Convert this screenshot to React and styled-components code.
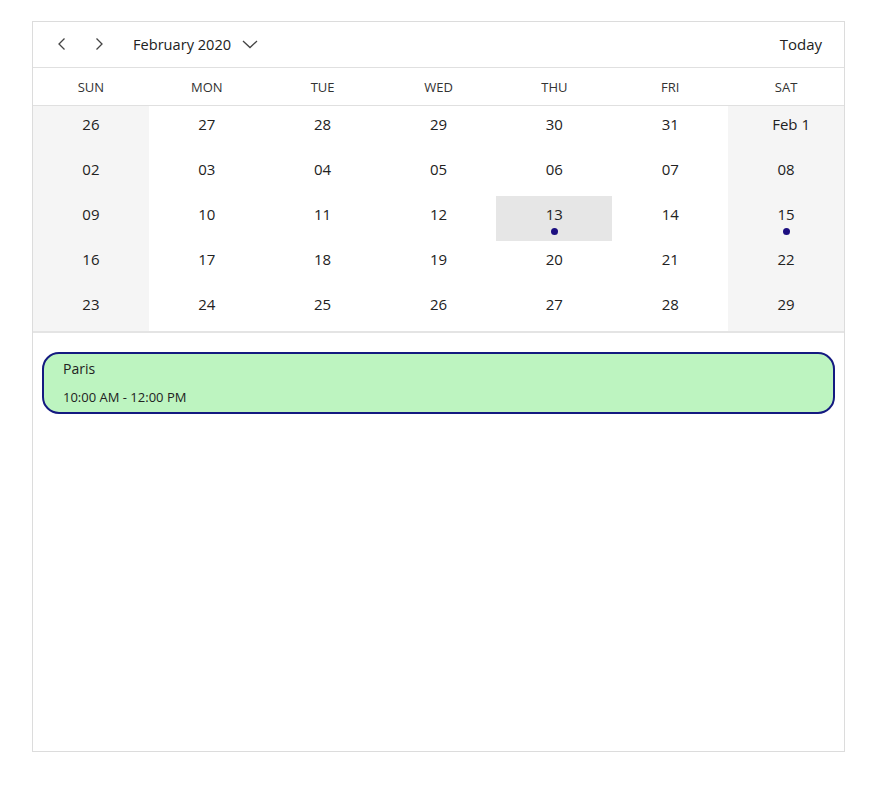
import React from "react";
import styled, { createGlobalStyle } from "styled-components";

const Global = createGlobalStyle`
  body { margin: 0; background: #fff; font-family: "Open Sans", "Noto Sans", sans-serif; color: #333; }
`;

const Page = styled.div`
  padding: 21px 31px 0 32px;
  width: 875px;
  box-sizing: border-box;
`;

const Card = styled.div`
  width: 813px;
  height: 731px;
  box-sizing: border-box;
  border: 1px solid #dcdcdc;
  display: flex;
  flex-direction: column;
`;

const Header = styled.div`
  height: 46px;
  box-sizing: border-box;
  border-bottom: 1px solid #e0e0e0;
  display: flex;
  align-items: center;
  padding: 0 22px 1px 20px;
`;

const NavBtn = styled.button`
  background: none;
  border: 0;
  padding: 0;
  width: 18px;
  height: 24px;
  display: flex;
  align-items: center;
  justify-content: center;
  margin-right: ${(p) => p.$mr}px;
  cursor: pointer;
`;

const Title = styled.div`
  font-size: 14.6px;
  color: #222;
  display: flex;
  align-items: center;
  gap: 11px;
`;

const Spacer = styled.div`flex: 1;`;

const Today = styled.div`
  font-size: 15px;
  color: #222;
`;

const WeekRow = styled.div`
  display: grid;
  grid-template-columns: repeat(7, 1fr);
  height: 38px;
  box-sizing: border-box;
  border-bottom: 1px solid #e0e0e0;
`;

const WeekDay = styled.div`
  display: flex;
  align-items: center;
  justify-content: center;
  font-size: 13px;
  color: #333;
`;

const Grid = styled.div`
  display: grid;
  grid-template-columns: repeat(7, 1fr);
  grid-auto-rows: 45px;
  border-bottom: 2px solid #e4e4e4;
`;

const Cell = styled.div`
  position: relative;
  display: flex;
  justify-content: center;
  padding-top: 8px;
  padding-left: ${(p) => (p.$shift ? "10px" : "0")};
  box-sizing: border-box;
  font-size: 15px;
  color: #222;
  background: ${(p) => (p.$selected ? "#e6e6e6" : p.$weekend ? "#f5f5f5" : "#fff")};
`;

const Dot = styled.span`
  position: absolute;
  left: 50%;
  top: 32px;
  width: 7px;
  height: 7px;
  margin-left: -3.5px;
  border-radius: 50%;
  background: #1c0f80;
`;

const Agenda = styled.div`
  flex: 1;
  padding: 19px 9px 0 9px;
`;

const Event = styled.div`
  height: 62px;
  box-sizing: border-box;
  border: 2px solid #141a80;
  border-radius: 17px;
  background: #bdf4c0;
  padding: 5px 19px;
  display: flex;
  flex-direction: column;
  gap: 9px;
`;

const EventTitle = styled.div`
  font-size: 14px;
  color: #222;
  line-height: 20px;
`;

const EventTime = styled.div`
  font-size: 13px;
  color: #222;
  line-height: 18px;
`;

const days = ["SUN", "MON", "TUE", "WED", "THU", "FRI", "SAT"];
const weeks = [
  ["26", "27", "28", "29", "30", "31", "Feb 1"],
  ["02", "03", "04", "05", "06", "07", "08"],
  ["09", "10", "11", "12", "13", "14", "15"],
  ["16", "17", "18", "19", "20", "21", "22"],
  ["23", "24", "25", "26", "27", "28", "29"],
];

const Chev = ({ d }) => (
  <svg width="16" height="16" viewBox="0 0 16 16" fill="none" stroke="#444" strokeWidth="1.3">
    <path d={d} />
  </svg>
);

export default function App() {
  return (
    <>
      <Global />
      <Page>
        <Card>
          <Header>
            <NavBtn $mr={19}><Chev d="M10.5 2.5 L5 8 L10.5 13.5" /></NavBtn>
            <NavBtn $mr={25}><Chev d="M5.5 2.5 L11 8 L5.5 13.5" /></NavBtn>
            <Title>
              February 2020
              <Chev d="M1 5 L8 11.5 L15 5" />
            </Title>
            <Spacer />
            <Today>Today</Today>
          </Header>
          <WeekRow>
            {days.map((d) => <WeekDay key={d}>{d}</WeekDay>)}
          </WeekRow>
          <Grid>
            {weeks.map((w, wi) =>
              w.map((d, di) => {
                const selected = wi === 2 && di === 4;
                const dot = wi === 2 && (di === 4 || di === 6);
                return (
                  <Cell
                    key={wi + "-" + di}
                    $weekend={di === 0 || di === 6}
                    $selected={selected}
                    $shift={d.length > 2}
                  >
                    {d}
                    {dot && <Dot />}
                  </Cell>
                );
              })
            )}
          </Grid>
          <Agenda>
            <Event>
              <EventTitle>Paris</EventTitle>
              <EventTime>10:00 AM - 12:00 PM</EventTime>
            </Event>
          </Agenda>
        </Card>
      </Page>
    </>
  );
}
